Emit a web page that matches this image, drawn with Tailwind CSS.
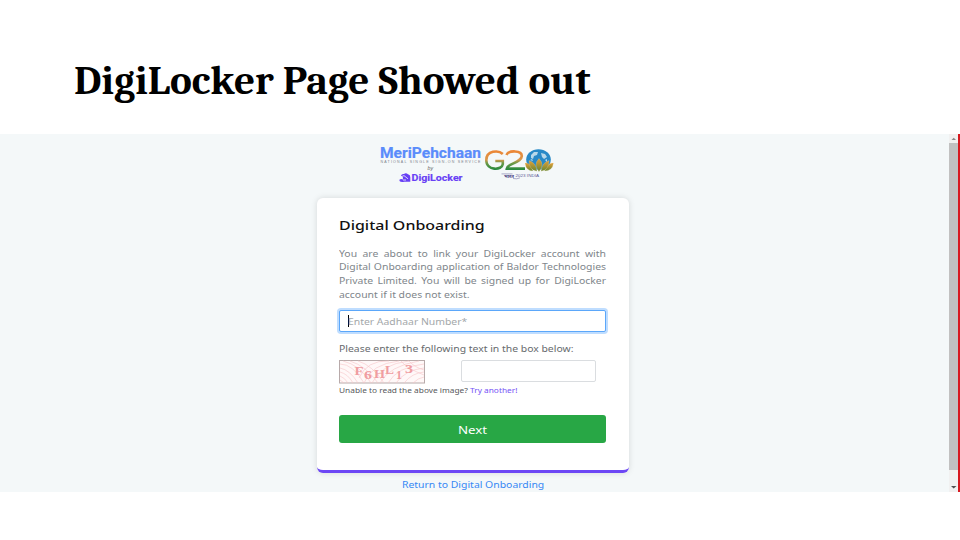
<!DOCTYPE html>
<html lang="en">
<head>
<meta charset="utf-8">
<title>DigiLocker Page Showed out</title>
<script src="https://cdn.jsdelivr.net/npm/@tailwindcss/browser@4"></script>
</head>
<body class="bg-white w-[960px] h-[540px] overflow-hidden font-['Noto_Sans','Open_Sans',sans-serif]">
<header class="h-[134px] pl-[74px] pt-[55px]">
  <h1 class="w-max origin-left scale-x-[1.043] text-[39.500px] leading-[52px] font-bold text-black whitespace-nowrap font-[Cambria,Caladea,'Noto_Serif','Droid_Serif','DejaVu_Serif_Condensed','DejaVu_Serif',serif]">DigiLocker Page Showed out</h1>
</header>
<main class="flex h-[358px] bg-[#f4f8f9] overflow-hidden">
  <div class="flex-1 pl-[317px]">
    <div class="h-[64px]">
      <svg class="block ml-[58px]" width="190" height="63" viewBox="375 134 190 63">
        <defs>
          <linearGradient id="tri" gradientUnits="userSpaceOnUse" x1="0" y1="150" x2="0" y2="170"><stop offset="0" stop-color="#ee8432"/><stop offset=".48" stop-color="#d9974c"/><stop offset=".65" stop-color="#6f9a48"/><stop offset="1" stop-color="#23883f"/></linearGradient>
          <linearGradient id="petal" x1="0" y1="0" x2="0" y2="1"><stop offset="0" stop-color="#e7a13a"/><stop offset="1" stop-color="#66852f"/></linearGradient>
        </defs>
        <text x="380" y="157.600" font-family="Roboto" font-weight="700" font-size="14.800" fill="#5a8cfb" stroke="#5a8cfb" stroke-width=".2" textLength="101" lengthAdjust="spacingAndGlyphs">MeriPehchaan</text>
        <text x="380.5" y="163" font-family="Liberation Sans" font-size="3.600" fill="#7d828c" textLength="100" lengthAdjust="spacing">NATIONAL SINGLE SIGN-ON SERVICE</text>
        <text x="427.500" y="170" font-family="Liberation Sans" font-style="italic" font-size="5" fill="#666" textLength="5.500" lengthAdjust="spacingAndGlyphs">by</text>
        <path d="M401 175.800q.6-2.300 3-1.800 2-1.500 4 .3 2.500.5 2.300 3v4.500h-6q-5.800.8-4.700-2.200 1.400-1.200 3.200-.2l.2-1.800z" fill="#6840f5"/>
        <path d="M400.500 177l3.500-1.400 4 3.200M403 180h3" stroke="#f4f8f9" stroke-width=".8" fill="none"/>
        <text x="411.500" y="181.200" font-family="Roboto" font-weight="700" font-size="9.400" fill="#6840f5" stroke="#6840f5" stroke-width=".15" textLength="51" lengthAdjust="spacingAndGlyphs">DigiLocker</text>
        <g fill="none" stroke="url(#tri)" stroke-width="2.600">
          <path d="M502.800 154C498.500 149.900 486.300 150.300 486.300 160.200c0 10.800 15.800 10.300 16.500 4v-3.200h-7.500"/>
          <path d="M506.500 155c1.800-4.900 15.500-5 15.300 1.100-.1 4-6 5.900-12 9.100-2 1-2.800 2-3 3.400h18.200"/>
        </g>
        <ellipse cx="538.500" cy="159.500" rx="12.300" ry="10.300" fill="#2789c7"/>
        <path d="M531 155l3-3 4 0-1 3-3 1-1 3-2-1zM541 153l4 1 2 3-3 2-2-2zM530 160l2-1 1 2zM545 160l2-1 0 3z" fill="#b7d8ea"/>
        <g fill="url(#petal)" stroke="#f4e8c4" stroke-width=".2">
          <path d="M525 163q5-1 8 8-7 0-8-8zM553.500 163q-5-1-9 8 8 0 9-8z"/>
          <path d="M529 160.500q7 2 8 10.800-8-1-8-10.800zM549 160.500q-7 2-8 10.800 8-1 8-10.800z"/>
          <path d="M539 158.500q6 6 0 13.200-6-7 0-13.200z"/>
        </g>
        <text x="504" y="177.600" font-family="Noto Sans,Liberation Sans" font-weight="700" font-size="4.600" fill="#494382" textLength="10" lengthAdjust="spacingAndGlyphs">भारत</text>
        <path d="M501.500 173.900h11M513 178.500q4 1 7-.7" fill="none" stroke="#625c96" stroke-width=".5"/>
        <text x="515.500" y="177" font-family="Liberation Sans" font-size="4" fill="#625c96" textLength="23.500" lengthAdjust="spacingAndGlyphs">2023 INDIA</text>
      </svg>
    </div>
    <section class="w-[312px] h-[275px] rounded-[6px] bg-white border-b-[3px] border-[#6c47f5] px-[22px] pt-[16.500px] shadow-[0_0_6px_rgba(0,0,0,0.13)]">
      <h2 class="w-max origin-left scale-x-[1.21] text-[13.200px] leading-[20px] font-medium text-[#111] whitespace-nowrap">Digital Onboarding</h2>
      <p class="mt-[12px] w-[233.200px] origin-left scale-x-[1.145] text-justify text-[9.100px] leading-[13.700px] text-[#80868b]">You are about to link your DigiLocker account with Digital Onboarding application of Baldor Technologies Private Limited. You will be signed up for DigiLocker account if it does not exist.</p>
      <div class="mt-[8.700px] flex items-center w-[267px] h-[22px] rounded-[2px] border border-[#5ba7fa] bg-white pl-[8px] shadow-[0_0_0_2px_#bfddff]">
        <span class="h-[12px] w-px bg-black"></span>
        <span class="-ml-px pt-px origin-left scale-x-[1.145] text-[9.100px] text-[#a3a7aa] whitespace-nowrap">Enter Aadhaar Number*</span>
      </div>
      <p class="mt-[9.500px] w-max origin-left scale-x-[1.145] text-[9.100px] leading-[14px] text-[#686b6e] whitespace-nowrap">Please enter the following text in the box below:</p>
      <div class="mt-[4px] flex h-[24px]">
        <svg class="block" width="86" height="24" viewBox="0 0 86 24">
          <rect x=".5" y=".5" width="85" height="22.500" fill="#fff8f8" stroke="#b8aaaa"/>
          <g fill="none" stroke="#f7c5c8" stroke-width=".6">
            <path d="M1 4q13 0 24 19M1 8q10 2 18 15M1 12q8 2 13 11M1 16q5 2 8 7M1 20l4 3M4 1q17 4 28 22M11 1q16 5 28 22M19 1q14 4 26 22"/>
            <path d="M20 18Q28 0 50 1M25 23Q32 4 60 1M33 23Q42 4 70 1M41 23Q50 6 80 1M49 23Q58 7 85 4M57 23Q66 10 85 8M65 23Q73 13 85 12M74 23q5-5 11-6M62 1q5 7 23 14M70 1q5 6 15 9"/>
          </g>
          <g font-family="Liberation Serif" font-weight="700" fill="#f09da1" font-size="12">
            <text x="15.500" y="15" textLength="9" lengthAdjust="spacingAndGlyphs">F</text><text x="25" y="18.500" textLength="8" lengthAdjust="spacingAndGlyphs">6</text><text x="35" y="18" textLength="11" lengthAdjust="spacingAndGlyphs">H</text><text x="46" y="14" textLength="9" lengthAdjust="spacingAndGlyphs">L</text><text x="57" y="18.500" textLength="6" lengthAdjust="spacingAndGlyphs">1</text><text x="66" y="13" textLength="8" lengthAdjust="spacingAndGlyphs">3</text>
          </g>
        </svg>
        <div class="ml-[36px] w-[135px] h-[22px] rounded-[2px] border border-[#dadde0] bg-white"></div>
      </div>
      <p class="mt-[1.500px] w-max origin-left scale-x-[1.14] text-[7.300px] leading-[11px] text-[#58595c] whitespace-nowrap">Unable to read the above image? <a class="text-[#7552f6]">Try another!</a></p>
      <button class="mt-[19px] block w-[267px] h-[28px] rounded-[3px] bg-[#28a745] text-white text-[11.400px] leading-[29px]"><span class="inline-block scale-x-[1.17]">Next</span></button>
    </section>
    <p class="w-[312px] pt-[4px] text-center text-[9.100px] leading-[16px] text-[#3788f5]"><a class="inline-block scale-x-[1.145] whitespace-nowrap">Return to Digital Onboarding</a></p>
  </div>
  <div class="w-[9px] bg-[#f1f1f1] flex flex-col items-center justify-between">
    <svg class="block" width="9" height="9"><path d="M2.500 6h4.500L4.700 3.800z" fill="#888"/></svg>
    <div class="w-full h-[327px] bg-[#c1c1c1]"></div>
    <div class="h-[22px] flex items-end"><svg class="block" width="9" height="9"><path d="M2 3h5.500L4.700 5.500z" fill="#505050"/></svg></div>
  </div>
  <div class="w-[2px] bg-[#d71920]"></div>
</main>
</body>
</html>
